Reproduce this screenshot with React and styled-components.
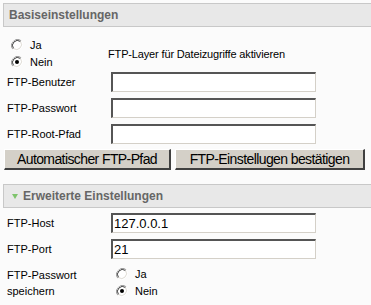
import React from "react";
import styled, { createGlobalStyle } from "styled-components";

const Global = createGlobalStyle`
  html, body { margin: 0; padding: 0; background: #fbfbfb; }
  body { font-family: "Liberation Sans", Arial, sans-serif; font-size: 11px; color: #000; }
`;

const Page = styled.div`
  width: 371px;
  height: 305px;
  overflow: hidden;
  padding: 3px 0 0 3px;
  box-sizing: border-box;
`;

const SectionHeader = styled.div`
  height: 22px;
  border: 1px solid #c8c8c8;
  border-right: none;
  background: #e8e8e8;
  display: flex;
  align-items: center;
  gap: 5px;
  padding-left: ${(p) => (p.$icon ? 8 : 5)}px;
  margin-top: ${(p) => p.$mt || 0}px;
  font-weight: bold;
  font-size: 12px;
  color: #666;
`;

const Triangle = styled.span`
  width: 0;
  height: 0;
  border-left: 3.5px solid transparent;
  border-right: 3.5px solid transparent;
  border-top: 5px solid #7ec46c;
  margin-top: 1px;
`;

const ToggleRow = styled.div`
  display: flex;
  align-items: center;
  margin-top: 9px;
  padding-left: 8px;
`;

const RadioList = styled.div`
  display: flex;
  flex-direction: column;
  width: 97px;
  padding-left: ${(p) => p.$pl || 0}px;
`;

const RadioItem = styled.label`
  display: flex;
  align-items: center;
  height: 17px;
  gap: 7px;
`;

const Description = styled.span`
  padding-top: 1px;
  letter-spacing: -0.15px;
`;

const FieldGrid = styled.div`
  display: grid;
  grid-template-columns: 104px 205px;
  row-gap: 6px;
  margin-top: ${(p) => p.$mt || 0}px;
  padding-left: 4px;
  align-items: center;
`;

const Label = styled.span`
  line-height: 16px;
  align-self: ${(p) => (p.$top ? "start" : "center")};
  padding-top: ${(p) => (p.$top ? 2 : 0)}px;
`;

const Input = styled.input`
  height: 20px;
  box-sizing: border-box;
  width: 205px;
  margin: 0;
  padding: 0 1px;
  border-top: 2px solid #555;
  border-left: 2px solid #555;
  border-right: 1px solid #d4d0c8;
  border-bottom: 1px solid #d4d0c8;
  background: #fff;
  font-family: "Liberation Sans", Arial, sans-serif;
  font-size: 13px;
  color: #000;
  outline: none;
`;

const ButtonRow = styled.div`
  display: flex;
  gap: 4px;
  margin: 5px 0 0 1px;
`;

const Button = styled.button`
  height: 21px;
  width: ${(p) => p.$w}px;
  box-sizing: border-box;
  margin: 0;
  padding: 0;
  white-space: nowrap;
  background: #d4d0c8;
  border-top: 1px solid #fff;
  border-left: 1px solid #fff;
  border-right: 2px solid #404040;
  border-bottom: 2px solid #404040;
  font-family: "Liberation Sans", Arial, sans-serif;
  font-size: 14px;
  letter-spacing: -0.6px;
  color: #000;
  line-height: 18px;
`;

const Radio = ({ checked }) => (
  <svg width="12" height="12" viewBox="0 0 12 12">
    <path d="M10.2 1.8 A6 6 0 0 0 1.8 10.2" fill="none" stroke="#9a9a9a" strokeWidth="1" />
    <path d="M1.8 10.2 A6 6 0 0 0 10.2 1.8" fill="none" stroke="#fff" strokeWidth="1" />
    <circle cx="6" cy="6" r="5" fill="#fff" stroke="none" />
    <path d="M9.5 2.5 A5 5 0 0 0 2.5 9.5" fill="none" stroke="#404040" strokeWidth="1" />
    <path d="M2.5 9.5 A5 5 0 0 0 9.5 2.5" fill="none" stroke="#e0ddd6" strokeWidth="1" />
    {checked && <circle cx="6" cy="6" r="2" fill="#000" />}
  </svg>
);

const RadioChoices = ({ value, pl }) => (
  <RadioList $pl={pl}>
    <RadioItem>
      <Radio checked={value === "ja"} />
      <span>Ja</span>
    </RadioItem>
    <RadioItem>
      <Radio checked={value === "nein"} />
      <span>Nein</span>
    </RadioItem>
  </RadioList>
);

export default function App() {
  return (
    <>
      <Global />
      <Page>
        <SectionHeader>Basiseinstellungen</SectionHeader>
        <ToggleRow>
          <RadioChoices value="nein" />
          <Description>FTP-Layer für Dateizugriffe aktivieren</Description>
        </ToggleRow>
        <FieldGrid $mt={2}>
          <Label>FTP-Benutzer</Label>
          <Input defaultValue="" />
          <Label>FTP-Passwort</Label>
          <Input type="password" defaultValue="" />
          <Label>FTP-Root-Pfad</Label>
          <Input defaultValue="" />
        </FieldGrid>
        <ButtonRow>
          <Button $w={167}>Automatischer FTP-Pfad</Button>
          <Button $w={190}>FTP-Einstellugen bestätigen</Button>
        </ButtonRow>
        <SectionHeader $mt={14} $icon>
          <Triangle />
          Erweiterte Einstellungen
        </SectionHeader>
        <FieldGrid $mt={5}>
          <Label>FTP-Host</Label>
          <Input defaultValue="127.0.0.1" />
          <Label>FTP-Port</Label>
          <Input defaultValue="21" />
          <Label $top>
            FTP-Passwort
            <br />
            speichern
          </Label>
          <RadioChoices value="nein" pl={5} />
        </FieldGrid>
      </Page>
    </>
  );
}
